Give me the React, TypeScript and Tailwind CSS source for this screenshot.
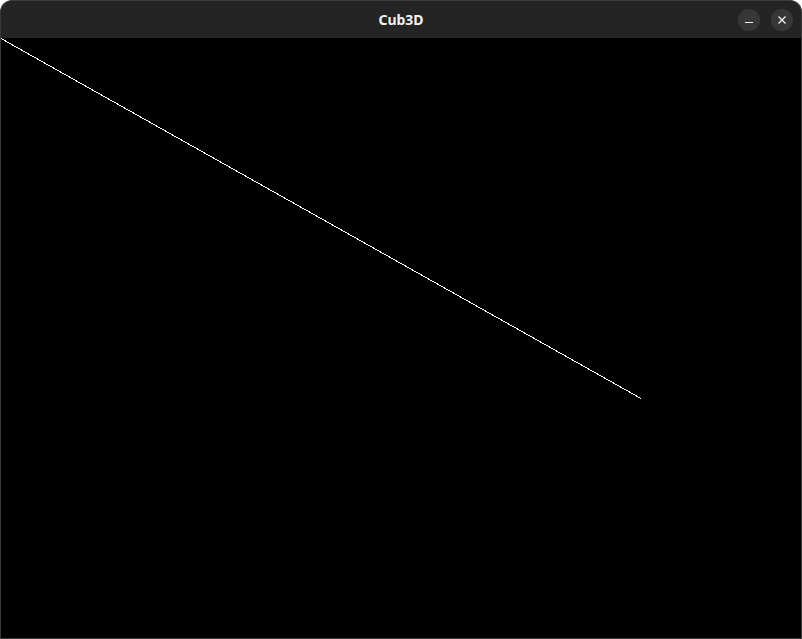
import React from "react";

export default function App() {
  return (
    <div className="w-[802px] h-[639px] bg-white">
      <div className="w-[802px] h-[639px] flex flex-col rounded-t-[12px] overflow-hidden bg-[#242424] border border-t-[#3c3c3c] border-x-[#3a3a3a] border-b-[#3a3a3a]">
        <div className="h-[37px] shrink-0 relative flex items-center justify-center">
          <span className="text-[14px] font-bold text-[#f2f2f2] leading-none" style={{ fontFamily: '"Noto Sans", "Open Sans", sans-serif' }}>
            Cub3D
          </span>
          <div className="absolute right-[8px] top-[8px] flex gap-[11px]">
            <div className="w-[22px] h-[22px] rounded-full bg-[#373737] flex items-center justify-center">
              <svg width="10" height="10" viewBox="0 0 10 10">
                <rect x="1" y="7" width="8" height="1" fill="#f2f2f2" />
              </svg>
            </div>
            <div className="w-[22px] h-[22px] rounded-full bg-[#373737] flex items-center justify-center">
              <svg width="10" height="10" viewBox="0 0 10 10">
                <path d="M1.5 1.5 L8.5 8.5 M8.5 1.5 L1.5 8.5" stroke="#f2f2f2" strokeWidth="1.3" />
              </svg>
            </div>
          </div>
        </div>
        <div className="w-[800px] h-[600px] bg-black">
          <svg width="800" height="600" viewBox="0 0 800 600" className="block" shapeRendering="crispEdges">
            <line x1="0" y1="0.5" x2="640" y2="360.5" stroke="#ffffff" strokeWidth="1" />
          </svg>
        </div>
      </div>
    </div>
  );
}
